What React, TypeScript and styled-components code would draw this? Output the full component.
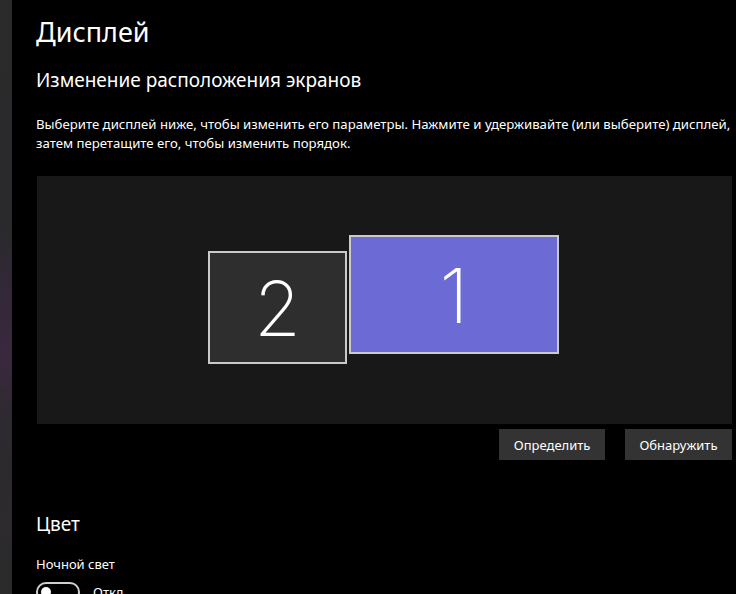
import styled, { createGlobalStyle } from 'styled-components';

const GlobalStyle = createGlobalStyle`
  html, body {
    margin: 0;
    padding: 0;
    background: #000;
    overflow: hidden;
  }
  body {
    font-family: "Segoe UI", "Noto Sans", "Open Sans", sans-serif;
    color: #fff;
  }
`;

const Window = styled.div`
  display: flex;
  width: 736px;
  height: 594px;
  overflow: hidden;
`;

const Rail = styled.div`
  width: 12px;
  flex-shrink: 0;
  background: linear-gradient(
    180deg,
    #2b2b2b 0%,
    #2a2a2d 38%,
    #35283b 52%,
    #3a283e 60%,
    #2e2a30 70%,
    #2b2b2b 100%
  );
`;

const Main = styled.main`
  flex: 1;
  min-width: 0;
  padding: 12px 4px 0 24px;
  display: flex;
  flex-direction: column;

  & > * {
    flex-shrink: 0;
  }
`;

const Title = styled.h1`
  margin: 0;
  font-size: 27px;
  font-weight: 400;
  line-height: 40px;
`;

const SectionTitle = styled.h2<{ $top: number }>`
  margin: ${p => p.$top}px 0 0;
  font-size: 19px;
  font-weight: 400;
  line-height: 28px;
`;

const Text = styled.p`
  margin: 21px 0 0;
  font-size: 13.2px;
  line-height: 19px;
  color: #fff;
`;

const Canvas = styled.div`
  position: relative;
  margin: 23px 0 0 1px;
  height: 248px;
  background: #181818;
`;

const Monitor = styled.div<{ $x: number; $y: number; $w: number; $h: number; $active?: boolean }>`
  position: absolute;
  left: ${p => p.$x}px;
  top: ${p => p.$y}px;
  width: ${p => p.$w}px;
  height: ${p => p.$h}px;
  box-sizing: border-box;
  border: 2px solid #cacaca;
  background: ${p => (p.$active ? '#6c6bd6' : '#2e2e2e')};
  display: flex;
  align-items: center;
  justify-content: center;
  font-family: Inter, "Noto Sans", sans-serif;
  font-weight: 200;
  font-size: 76px;
  line-height: 1;
  color: #fff;
`;

const Actions = styled.div`
  display: flex;
  justify-content: flex-end;
  gap: 20px;
  margin-top: 5px;
`;

const Button = styled.button`
  height: 31px;
  padding: 0 14.5px;
  border: none;
  background: #333;
  color: #fff;
  font-family: inherit;
  font-size: 13px;
`;

const Label = styled.div`
  margin-top: 17px;
  font-size: 13px;
  line-height: 19px;
`;

const ToggleRow = styled.div`
  display: flex;
  align-items: center;
  gap: 13px;
  margin-top: 8px;
`;

const Toggle = styled.div`
  width: 44px;
  height: 20px;
  box-sizing: border-box;
  border: 2px solid #d0d0d0;
  border-radius: 10px;
  display: flex;
  align-items: center;
  padding-left: 3px;
`;

const Knob = styled.span`
  width: 10px;
  height: 10px;
  border-radius: 50%;
  background: #fff;
`;

const ToggleText = styled.span`
  font-size: 13px;
`;

export default function App() {
  return (
    <>
      <GlobalStyle />
      <Window>
        <Rail />
        <Main>
          <Title>Дисплей</Title>
          <SectionTitle $top={14}>Изменение расположения экранов</SectionTitle>
          <Text>
            Выберите дисплей ниже, чтобы изменить его параметры. Нажмите и удерживайте (или выберите) дисплей,
            затем перетащите его, чтобы изменить порядок.
          </Text>
          <Canvas>
            <Monitor $x={171} $y={75} $w={139} $h={113}>2</Monitor>
            <Monitor $x={312} $y={59} $w={210} $h={119} $active>1</Monitor>
          </Canvas>
          <Actions>
            <Button>Определить</Button>
            <Button>Обнаружить</Button>
          </Actions>
          <SectionTitle $top={50}>Цвет</SectionTitle>
          <Label>Ночной свет</Label>
          <ToggleRow>
            <Toggle><Knob /></Toggle>
            <ToggleText>Откл.</ToggleText>
          </ToggleRow>
        </Main>
      </Window>
    </>
  );
}
